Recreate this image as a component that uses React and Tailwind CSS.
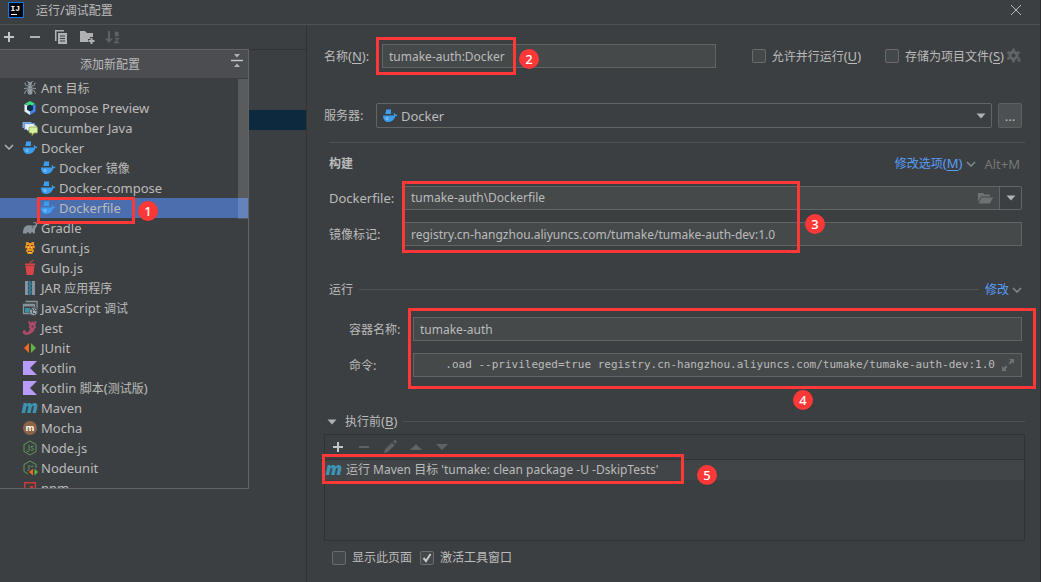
import { useState } from 'react';

// CJK runs are set one step smaller than the latin text around them
function T({ children }) {
  return children.split(/([\u4e00-\u9fff]+)/).map((part, i) =>
    /[\u4e00-\u9fff]/.test(part) ? <span key={i} className="text-[12px]">{part}</span> : part
  );
}

function Mnemonic({ text, letter, className = '' }) {
  return (
    <span className={className}>
      <T>{text}</T>(<span className="underline underline-offset-2">{letter}</span>)
    </span>
  );
}

function Svg({ children, className = 'size-4' }) {
  return (
    <svg viewBox="0 0 16 16" className={'shrink-0 ' + className} fill="none" aria-hidden="true">
      {children}
    </svg>
  );
}

const DockerIcon = () => (
  <Svg>
    <path d="M4 1.500h5V6H3.500V4H4z" fill="#3a9df0" />
    <path d="M1 7.500h11c.2-1-.3-1.700-.3-2.700.8.300 1.400 1 1.500 1.800.8-.2 1.700 0 2.300.4-.4.900-1.300 1.300-2.300 1.300C12.400 11.800 9.800 14 6.300 14 2.800 14 1 11.600 1 7.500z" fill="#3a9df0" />
    <circle cx="5" cy="10.500" r="1.100" stroke="#a9d3f5" strokeWidth=".7" />
  </Svg>
);

const AntIcon = () => (
  <Svg>
    <g fill="#8f9ba1">
      <circle cx="8" cy="4" r="1.900" />
      <ellipse cx="8" cy="7.300" rx="1.700" ry="1.700" />
      <ellipse cx="8" cy="11.800" rx="2.500" ry="3" />
    </g>
    <path d="M6.800 3 5.500 1M9.200 3l1.300-2M7 6.500 3.500 5 3 2.500M9 6.500 12.500 5l.5-2.500M7 8 2 8.500M9 8l5 .5M7 9l-3.500 2L2.500 14M9 9l3.500 2 1 3" stroke="#8f9ba1" />
  </Svg>
);

const ComposeIcon = () => (
  <Svg>
    <path d="M8 1 13 3.800 8 7 3 3.800z" fill="#3ddc84" />
    <path d="M2.500 4 8 7v8l-5.500-3.500z" fill="#e3f1f8" />
    <path d="M13.500 4 8 7v8l5.500-3.500z" fill="#4285f4" />
    <path d="m8 4.500 3 1.700v3.500L8 11.500 5 9.700V6.200z" fill="#083042" />
  </Svg>
);

const CucumberIcon = () => (
  <Svg>
    <path d="M.5 2h9v6h-9z" fill="#7fa9dc" />
    <path d="M2.500 3.500h10v6h-10z" fill="#dfeaf7" stroke="#5a8fd0" strokeWidth=".8" />
    <path d="M5 5.500h9.500v5H5z" fill="#eef4fa" />
    <path d="M8 7h6.500q1 0 1 1v4q0 1-1 1H12l-2 2.500V13H8q-1 0-1-1V8q0-1 1-1z" fill="#d7eda2" stroke="#82ad3c" strokeWidth=".8" />
  </Svg>
);

const GradleIcon = () => (
  <Svg>
    <path d="M1 13.500C.8 9.500 2 6.500 5 5.500c2-.7 4.200 0 6 .2 1.500.1 2.800-.5 2.700-1.800-.1-1-1.300-1.200-2-.5l-.6-.8c1.500-1.300 4-.6 4.100 1.500.1 2.500-1.900 3.800-2.200 6-.1 1.200 0 2.200-.1 3.400h-1.700c-.2-1.700-2-1.700-2.300 0H7c-.3-1.700-2-1.700-2.300 0z" fill="#87939a" />
    <circle cx="10.500" cy="7.300" r=".6" fill="#3c3f41" />
  </Svg>
);

const GruntIcon = () => (
  <Svg>
    <path d="M4 2h2l1 1h2l1-1h2v3l1 2-1 2v2l-2 3H6l-2-3V9L3 7l1-2z" fill="#e8961f" />
    <path d="M5 5h2v1H5zM9 5h2v1H9zM7 8h2l-1 1zM6 11h4v1H6zM4 8h1v2H4zM11 8h1v2h-1z" fill="#7e4414" />
    <path d="M6 7h1v1H6zM9 7h1v1H9zM7 12h2v1H7z" fill="#f9d58c" />
  </Svg>
);

const GulpIcon = () => (
  <Svg>
    <path d="M3 3.500h10v2H3zM3.500 6h9l-1.200 9H4.700z" fill="#db4446" />
    <path d="M7.700 4.500 8.700 1.500l3-1" stroke="#db4446" />
  </Svg>
);

const JarIcon = () => (
  <Svg>
    <path d="M3 1h4v14H3zM9 1h4v14H9z" fill="#87939a" />
    <path d="M6 1h4v14H6z" fill="#2d5264" />
    <path d="M6.500 2h2M7.500 4h2M6.500 6h2M7.500 8h2M6.500 10h2M7.500 12h2M6.500 14h2" stroke="#40b6e0" />
  </Svg>
);

const JsDebugIcon = () => (
  <Svg>
    <path d="M3.500 1.500H15v7M1.500 4.500h11v9h-11z" stroke="#87939a" strokeWidth="1.300" />
    <path d="M1 4h12v2.500H1z" fill="#87939a" />
    <path d="M3 8h5v4.500H3z" fill="#3592a8" />
    <circle cx="11.500" cy="11.500" r="4" fill="#a2adb3" stroke="#3c3f41" strokeWidth=".8" />
    <path d="m9 9 2 1-1 2 1.500 2M12 8.500l1 2 2 .5M13 13l-1 1" stroke="#3c3f41" />
  </Svg>
);

const JestIcon = () => (
  <Svg>
    <path d="M6 1h1.500l1.300 2L10.300 1l1.500 2L13 1h1.500l-1.200 4.500c1 1 .5 2.500-.5 2.800C12.500 12 9 14 5 14.800c-3 .5-4.700-1.400-4-3.300.3-1.200 2-1.700 2.800-.6.5 1-.3 1.600-.3 1.600C5.500 12.500 8 11 8 8.500c-1.300-.5-1.500-2-.5-3z" fill="#b04a68" />
    <circle cx="10.500" cy="6.500" r="1" fill="#3c3f41" />
  </Svg>
);

const JUnitIcon = () => (
  <Svg>
    <path d="M7 3v10L2 8z" fill="#f26522" />
    <path d="M9 3v10l5-5z" fill="#62b543" />
  </Svg>
);

const KotlinIcon = () => (
  <Svg>
    <path d="M1 1h14L8 8l7 7H1z" fill="#b99bf8" />
  </Svg>
);

const MavenIcon = () => (
  <Svg className="size-4 overflow-visible">
    <text x="-0.500" y="13" fontFamily="Open Sans, sans-serif" fontSize="18" fontWeight="800" fontStyle="italic" fill="#3c94b4">m</text>
  </Svg>
);

const MochaIcon = () => (
  <Svg>
    <circle cx="8" cy="8" r="7" fill="#8d6446" />
    <text x="8" y="11" textAnchor="middle" fontFamily="Open Sans, sans-serif" fontSize="9" fontWeight="700" fill="#fff">m</text>
  </Svg>
);

const NodeIcon = () => (
  <Svg>
    <path d="m8 1 6 3.500v7L8 15l-6-3.500v-7z" stroke="#5d9a5b" />
    <path d="M7 5v5.500q0 1-1.500 1L4.500 11M11.500 6.300Q9 5.500 9 7c0 1.300 2.500.8 2.500 2.200 0 1.600-2.300 1.300-3 .5" stroke="#5d9a5b" />
  </Svg>
);

const NodeunitIcon = () => (
  <Svg>
    <path d="m8 1 6 3.500V8M6 14l-4-2.500v-7L8 1" stroke="#5d9a5b" />
    <path d="M7 5v4.500q0 1-1.500 1M11.500 6.300Q9 5.500 9 7" stroke="#5d9a5b" />
    <path d="M11 8.500v7L7 12z" fill="#f26522" />
    <path d="M12.500 8.500v7L16 12z" fill="#62b543" />
  </Svg>
);

const NpmIcon = () => (
  <Svg>
    <path d="M2.700 2.700h10.600v11H2.700z" stroke="#cb3837" strokeWidth="1.500" />
    <path d="M8 6h3v7H8z" fill="#cb3837" />
  </Svg>
);

const Chevron = ({ className = 'text-[#7f8b91]' }) => (
  <svg viewBox="0 0 10 6" className={'w-2.5 h-1.5 shrink-0 ' + className} fill="none" aria-hidden="true">
    <path d="m1 1 4 4 4-4" stroke="currentColor" strokeWidth="1.500" />
  </svg>
);

const Triangle = ({ className = 'text-[#afb1b3]' }) => (
  <svg viewBox="0 0 10 6" className={'w-2.5 h-1.5 shrink-0 ' + className} aria-hidden="true">
    <path d="M.5.500h9L5 5.500z" fill="currentColor" />
  </svg>
);

const PlusIcon = () => <Svg><path d="M8 3v10M3 8h10" stroke="#c3c5c7" strokeWidth="2" /></Svg>;
const MinusIcon = ({ color = '#afb1b3' }) => <Svg><path d="M3 8h10" stroke={color} strokeWidth="2" /></Svg>;

const types = [
  { name: 'Ant 目标', icon: AntIcon },
  { name: 'Compose Preview', icon: ComposeIcon },
  { name: 'Cucumber Java', icon: CucumberIcon },
  { name: 'Docker', icon: DockerIcon, open: true },
  { name: 'Docker 镜像', icon: DockerIcon, child: true },
  { name: 'Docker-compose', icon: DockerIcon, child: true },
  { name: 'Dockerfile', icon: DockerIcon, child: true },
  { name: 'Gradle', icon: GradleIcon },
  { name: 'Grunt.js', icon: GruntIcon },
  { name: 'Gulp.js', icon: GulpIcon },
  { name: 'JAR 应用程序', icon: JarIcon },
  { name: 'JavaScript 调试', icon: JsDebugIcon },
  { name: 'Jest', icon: JestIcon },
  { name: 'JUnit', icon: JUnitIcon },
  { name: 'Kotlin', icon: KotlinIcon },
  { name: 'Kotlin 脚本(测试版)', icon: KotlinIcon },
  { name: 'Maven', icon: MavenIcon },
  { name: 'Mocha', icon: MochaIcon },
  { name: 'Node.js', icon: NodeIcon },
  { name: 'Nodeunit', icon: NodeunitIcon },
  { name: 'npm', icon: NpmIcon },
];

// red frame with its numbered badge
function Frame({ className }) {
  return <div className={'absolute border-3 border-[#fe3737] pointer-events-none z-10 ' + className} />;
}

function Badge({ n, className }) {
  return (
    <span className={'absolute size-5 rounded-full bg-[#fe3737] text-white text-[13px] font-medium leading-5 text-center z-10 ' + className}>
      {n}
    </span>
  );
}

function Check({ id, checked, onChange, children }) {
  return (
    <div className="flex items-center gap-1.5">
      <span className="relative flex size-3.5">
        <input
          id={id}
          type="checkbox"
          checked={checked}
          onChange={(e) => onChange(e.target.checked)}
          className="appearance-none size-3.5 rounded-xs border border-[#6b6b6b] bg-[#43494a]"
        />
        {checked && (
          <svg viewBox="0 0 14 14" className="absolute inset-0 pointer-events-none" fill="none" aria-hidden="true">
            <path d="m3.500 7 2.500 3 4.500-7" stroke="#c8c8c8" strokeWidth="2" />
          </svg>
        )}
      </span>
      <label htmlFor={id} className="whitespace-nowrap">{children}</label>
    </div>
  );
}

const field = 'w-full h-6 px-1.5 text-[12px] border border-[#646464] bg-[#45494a] outline-none ';

function Sidebar() {
  const [selected, setSelected] = useState('Dockerfile');

  return (
    <aside className="relative w-[307px] shrink-0 border-r border-[#323232]">
      <div className="flex items-center gap-2.5 h-[25px] px-px border-b border-[#323232]">
        <button aria-label="添加"><PlusIcon /></button>
        <button aria-label="移除"><MinusIcon /></button>
        <button aria-label="复制">
          <Svg>
            <path d="M2 1h9v1.500H3.500V12H2z" fill="#afb1b3" />
            <path d="M5 4h9v11H5z" fill="#afb1b3" />
            <path d="M7 7h5M7 9.500h5M7 12h5" stroke="#3c3f41" />
          </Svg>
        </button>
        <button aria-label="新建文件夹">
          <Svg>
            <path d="M1 2h5l2 2h6v4h-3v2H9v3H1z" fill="#afb1b3" />
            <path d="M12.500 9v6M9.500 12h6" stroke="#afb1b3" strokeWidth="2" />
          </Svg>
        </button>
        <button aria-label="排序" disabled>
          <Svg>
            <path d="M4 2v9" stroke="#5f6163" strokeWidth="2" />
            <path d="M0 9.500h8L4 14z" fill="#5f6163" />
            <path d="M10 3.500h3v3h-2.500V5H13M10 9.500h3.500l-3.500 4h4" stroke="#5f6163" strokeWidth="1.300" />
          </Svg>
        </button>
      </div>
      <div className="mt-15 h-5 bg-[#0d293e]" />

      <div className="absolute left-0 top-6 w-[249px] h-[440px] flex flex-col border border-l-0 border-[#616365] bg-[#3c3f41]">
        <div className="relative h-7 shrink-0 flex items-center justify-center pr-7 bg-[#4b4d51]">
          <h2><T>添加新配置</T></h2>
          <button aria-label="全部折叠" className="absolute right-[3px] top-[3px]">
            <Svg>
              <path d="M5 1h6L8 4.500zM5 14h6l-3-3.500z" fill="#afb1b3" />
              <path d="M2 7.500h12" stroke="#c3c5c7" strokeWidth="1.500" />
            </Svg>
          </button>
        </div>
        <ul className="relative flex-1 overflow-hidden">
          {types.map((type) => (
            <li key={type.name} className={'relative h-5 ' + (type.name === selected ? 'bg-[#4b6eaf]' : '')}>
              {type.open && <Chevron className="absolute left-1 top-1.5 text-[#afb1b3]" />}
              <button
                onClick={() => setSelected(type.name)}
                className={'flex items-center gap-[3px] w-full h-5 ' + (type.child ? 'pl-10' : 'pl-[22px]')}
              >
                <type.icon />
                <span className="whitespace-nowrap"><T>{type.name}</T></span>
              </button>
              {type.name === 'Dockerfile' && (
                <>
                  <Frame className="left-[37px] -top-px w-[98px] h-[27px]" />
                  <Badge n={1} className="left-[138px] top-[3px]" />
                </>
              )}
            </li>
          ))}
          <li aria-hidden="true" className="absolute right-0 top-px w-2.5 h-[140px] bg-white/15" />
        </ul>
      </div>
    </aside>
  );
}

export default function App() {
  const [name, setName] = useState('tumake-auth:Docker');
  const [dockerfile, setDockerfile] = useState('tumake-auth\\Dockerfile');
  const [tag, setTag] = useState('registry.cn-hangzhou.aliyuncs.com/tumake/tumake-auth-dev:1.0');
  const [container, setContainer] = useState('tumake-auth');
  const [command, setCommand] = useState('.oad --privileged=true registry.cn-hangzhou.aliyuncs.com/tumake/tumake-auth-dev:1.0');
  const [parallel, setParallel] = useState(false);
  const [store, setStore] = useState(false);
  const [showPage, setShowPage] = useState(false);
  const [activate, setActivate] = useState(true);

  return (
    <div className="min-h-screen flex flex-col bg-[#3c3f41] text-[#bbbbbb] text-[13px] leading-5 font-['Noto_Sans','Noto_Sans_CJK_SC',sans-serif] border-r border-[#2b2d2e] overflow-hidden">
      <header className="flex items-center h-[25px] pl-2 pr-[18px] pb-1 border-b border-[#515151]">
        <Svg>
          <path d="M.5.500h15v15H.5z" fill="#000" stroke="#087cfa" />
          <text x="2.500" y="8.500" fontFamily="Liberation Mono, monospace" fontSize="8" fontWeight="700" fill="#fff">IJ</text>
          <path d="M3 12.500h6" stroke="#fff" />
        </Svg>
        <h1 className="ml-3 flex-1"><T>运行/调试配置</T></h1>
        <button aria-label="关闭">
          <svg viewBox="0 0 12 12" className="size-3" aria-hidden="true">
            <path d="m1 1 10 10M11 1 1 11" stroke="#bbbbbb" />
          </svg>
        </button>
      </header>

      <div className="flex-1 flex">
        <Sidebar />

        <main className="flex-1 min-w-0 pl-[17px] pr-[15px] pt-[19px]">
          <div className="flex items-center mr-[3px]">
            <label htmlFor="name" className="w-[58px] shrink-0"><Mnemonic text="名称" letter="N" />:</label>
            <div className="relative flex-1">
              <input id="name" value={name} onChange={(e) => setName(e.target.value)} className={field} />
              <Frame className="-left-1.5 -top-[7px] w-[140px] h-[38px]" />
              <Badge n={2} className="left-[137px] top-[5px]" />
            </div>
            <div className="flex items-center ml-9 gap-6">
              <Check id="parallel" checked={parallel} onChange={setParallel}>
                <Mnemonic text="允许并行运行" letter="U" />
              </Check>
              <Check id="store" checked={store} onChange={setStore}>
                <Mnemonic text="存储为项目文件" letter="S" />
              </Check>
            </div>
            <button aria-label="存储设置" className="ml-0.5">
              <Svg>
                <circle cx="7.500" cy="7.500" r="3.500" stroke="#616568" strokeWidth="3" />
                <path d="M7.500.500v3M7.500 11.500v3M1.400 4l2.600 1.500M11 9.500l2.600 1.500M1.400 11 4 9.500M11 5.500 13.600 4" stroke="#616568" strokeWidth="2.500" />
                <path d="M10 11h6l-3 4z" fill="#616568" stroke="#3c3f41" strokeWidth=".7" />
              </Svg>
            </button>
          </div>

          <div className="flex items-center mt-[35px] mr-[3px]">
            <label htmlFor="server" className="w-[52px] shrink-0"><T>服务器:</T></label>
            <div className="relative flex-1 flex items-center">
              <select id="server" className="appearance-none w-full h-[25px] pl-6 pr-6 border border-[#646464] rounded-xs outline-none">
                <option>Docker</option>
              </select>
              <span className="absolute left-1.5 pointer-events-none"><DockerIcon /></span>
              <Triangle className="absolute right-1.5 text-[#afb1b3] pointer-events-none" />
            </div>
            <button className="ml-1.5 w-6 h-[25px] border border-[#5e6060] rounded-xs bg-[#4c5052]">...</button>
          </div>

          <hr className="mt-3.5 ml-[5px] border-[#515151]" />

          <div className="flex items-center mt-2.5 ml-[5px] mr-[5px]">
            <h2 className="flex-1 font-bold"><T>构建</T></h2>
            <a href="#options" className="text-[#589df6]"><Mnemonic text="修改选项" letter="M" /></a>
            <Chevron className="ml-1 mr-2 text-[#7f8b91]" />
            <span className="text-[#777777]">Alt+M</span>
          </div>

          <div className="flex mt-3 ml-[5px] mr-[3px]">
            <div className="flex flex-col gap-3 w-[75px] shrink-0">
              <label htmlFor="dockerfile" className="h-6 leading-6">Dockerfile:</label>
              <label htmlFor="tag" className="h-6 leading-6"><T>镜像标记:</T></label>
            </div>
            <div className="relative flex-1 flex flex-col gap-3">
              <div className="flex h-6 border border-[#646464] rounded-xs bg-[#45494a]">
                <input
                  id="dockerfile"
                  value={dockerfile}
                  onChange={(e) => setDockerfile(e.target.value)}
                  className="flex-1 min-w-0 px-1.5 text-[12px] outline-none"
                />
                <button aria-label="浏览" className="px-1.5">
                  <Svg>
                    <path d="M1 3h5l1.500 1.500H13V6.500H4L1 12z" fill="#6e7275" />
                    <path d="M4.500 7.500H16l-3 6H1.500z" fill="#6e7275" />
                  </Svg>
                </button>
                <button aria-label="历史记录" className="w-[22px] flex items-center justify-center border-l border-[#646464] bg-[#3c3f41]">
                  <Triangle />
                </button>
              </div>
              <input id="tag" value={tag} onChange={(e) => setTag(e.target.value)} className={field} />
              <Frame className="-left-0.5 -top-[5px] w-[398px] h-[72px]" />
              <Badge n={3} className="left-[401px] top-7" />
            </div>
          </div>

          <div className="flex items-center mt-[33px] ml-[5px] mr-[3px]">
            <h2><T>运行</T></h2>
            <hr className="flex-1 mx-1.5 border-[#515151]" />
            <a href="#run-options" className="text-[#589df6]"><T>修改</T></a>
            <Chevron className="ml-[3px] text-[#7f8b91]" />
          </div>

          <div className="flex mt-[17px] ml-[25px] mr-[3px]">
            <div className="flex flex-col gap-3 w-16 shrink-0">
              <label htmlFor="container" className="h-6 leading-6"><T>容器名称:</T></label>
              <label htmlFor="command" className="h-6 leading-6"><T>命令:</T></label>
            </div>
            <div className="relative flex-1 flex flex-col gap-3">
              <input id="container" value={container} onChange={(e) => setContainer(e.target.value)} className={field} />
              <div className="flex h-6 border border-[#646464] bg-[#45494a]">
                <input
                  id="command"
                  value={command}
                  onChange={(e) => setCommand(e.target.value)}
                  className="flex-1 min-w-0 pl-[5px] text-right outline-none text-[11px] font-['DejaVu_Sans_Mono',monospace]"
                />
                <button aria-label="展开" className="px-[5px]">
                  <Svg>
                    <path d="M9 2h5v5l-1.700-1.700L10 7.500 8.500 6l2.200-2.300zM2 9v5h5l-1.700-1.700L7.500 10 6 8.500l-2.300 2.200z" fill="#6e7275" />
                  </Svg>
                </button>
              </div>
              <Frame className="-left-[5px] -right-3.5 -top-[9px] h-[81px]" />
              <Badge n={4} className="left-[380px] top-[73px]" />
            </div>
          </div>

          <div className="flex items-center mt-[34px] ml-[3px]">
            <Triangle />
            <h2 className="ml-2"><Mnemonic text="执行前" letter="B" /></h2>
            <hr className="flex-1 ml-1.5 border-[#515151]" />
          </div>

          <div className="mt-0.5 h-[107px] border border-[#323232]">
            <div className="flex items-center gap-2.5 h-[25px] pl-[5px] border-b border-[#323232]">
              <button aria-label="添加任务"><PlusIcon /></button>
              <button aria-label="移除任务" disabled><MinusIcon color="#5f6163" /></button>
              <button aria-label="编辑任务" disabled>
                <Svg><path d="m2 14 .8-3.500 7.200-7 2.700 2.700-7.200 7zM11 2.500l1.200-1.200q1-.8 2 .2t.2 2L13.500 5z" fill="#5f6163" /></Svg>
              </button>
              <button aria-label="上移" disabled><Svg><path d="M2 11h12L8 5z" fill="#5f6163" /></Svg></button>
              <button aria-label="下移" disabled><Svg><path d="M2 5h12l-6 6z" fill="#5f6163" /></Svg></button>
            </div>
            <div className="relative flex items-center gap-1 h-5 pl-px bg-[#414547]">
              <MavenIcon />
              <span className="text-[12px] whitespace-nowrap">运行 Maven 目标 'tumake: clean package -U -DskipTests'</span>
              <Frame className="-left-[3px] -top-1.5 w-[362px] h-[30px]" />
              <Badge n={5} className="left-[372px] top-[5px]" />
            </div>
          </div>

          <div className="flex items-center gap-2 mt-1.5 ml-2">
            <Check id="show-page" checked={showPage} onChange={setShowPage}><T>显示此页面</T></Check>
            <Check id="activate" checked={activate} onChange={setActivate}><T>激活工具窗口</T></Check>
          </div>
        </main>
      </div>
    </div>
  );
}
